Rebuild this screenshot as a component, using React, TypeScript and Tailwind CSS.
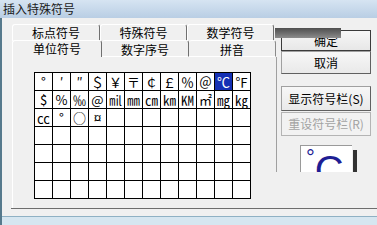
import React from "react";

const rows: string[][] = [
  ["°", "′", "″", "＄", "￥", "〒", "￠", "￡", "％", "＠", "℃", "℉"],
  ["$", "%", "‰", "@", "㏕", "㎜", "㎝", "㎞", "㏎", "㎡", "㎎", "㎏"],
  ["㏄", "°", "○", "¤", "", "", "", "", "", "", "", ""],
  ["", "", "", "", "", "", "", "", "", "", "", ""],
  ["", "", "", "", "", "", "", "", "", "", "", ""],
  ["", "", "", "", "", "", "", "", "", "", "", ""],
  ["", "", "", "", "", "", "", "", "", "", "", ""],
];

const backTabs = [
  { label: "标点符号", w: "w-[88px]" },
  { label: "特殊符号", w: "w-[87px]" },
  { label: "数学符号", w: "w-[87px]" },
];

const SymbolGrid = () => (
  <div className="grid grid-cols-[repeat(12,17px)] grid-rows-[repeat(7,17px)] gap-px bg-black p-px w-max">
    {rows.flat().map((s, i) => (
      <div
        key={i}
        className={
          i === 10
            ? "bg-[#1430b4] text-white text-[13px] leading-[17px] text-center"
            : "bg-white text-black text-[13px] leading-[17px] text-center"
        }
      >
        {s}
      </div>
    ))}
  </div>
);

const App = () => {
  return (
    <div className="w-[377px] h-[225px] bg-[#f0f0f0] flex flex-col overflow-hidden font-['Noto_Sans_CJK_SC',sans-serif] text-black">
      {/* title bar */}
      <div className="h-[18px] shrink-0 bg-gradient-to-b from-[#d6e4f2] to-[#b9cee4] pl-[3px] text-[12px] leading-[18px] text-[#1b1b1b]">
        插入特殊符号
      </div>

      <div className="flex-1 flex flex-col border-l-2 border-l-[#56798c]">
        <div className="h-[190px] flex">
          {/* tabs + panel */}
          <div className="w-[275px] pl-[10px] flex flex-col">
            <div className="flex mt-[6px] h-[17px]">
              {backTabs.map((t) => (
                <div
                  key={t.label}
                  className={`${t.w} h-[17px] border-t border-l border-r border-t-white border-l-white border-r-[#707070] rounded-t-[3px] text-center text-[12px] leading-[16px]`}
                >
                  {t.label}
                </div>
              ))}
            </div>
            <div className="flex -mt-px h-[17px]">
              <div className="w-[90px] h-[17px] bg-[#f0f0f0] border-t border-l border-r border-t-white border-l-white border-r-[#707070] rounded-t-[3px] text-center text-[12px] leading-[14px] pt-px">
                单位符号
              </div>
              <div className="w-[87px] h-[17px] border-t border-r border-b border-t-white border-r-[#707070] border-b-white rounded-t-[3px] text-center text-[12px] leading-[14px] pt-[2px]">
                数字序号
              </div>
              <div className="w-[87px] h-[17px] border-t border-r border-b border-t-white border-r-[#8a8a8a] border-b-white rounded-t-[3px] text-center text-[12px] leading-[14px] pt-[2px]">
                拼音
              </div>
            </div>
            <div className="flex-1 flex border-l border-l-white">
              <div className="flex-1 pl-[21px] pt-[15px]">
                <SymbolGrid />
              </div>
              <div className="w-px h-[115px] bg-[#a0a0a0]" />
            </div>
          </div>

          {/* buttons */}
          <div className="relative flex flex-col pl-[4px] pt-[12px]">
            <div className="w-[90px] h-[21px] border border-[#3a3a3a] bg-gradient-to-b from-[#f7f7f7] to-[#e7e7e7] flex items-center justify-center text-[12px]">
              确定
            </div>
            <div className="w-[90px] h-[23px] border border-[#a0a0a0] border-r-[#606060] border-b-[#606060] bg-gradient-to-b from-[#f7f7f7] to-[#e9e9e9] flex items-center justify-center text-[12px]">
              取消
            </div>
            <div className="mt-[12px] w-[90px] h-[25px] border border-[#a0a0a0] border-r-[#606060] border-b-[#606060] bg-gradient-to-b from-[#f7f7f7] to-[#e9e9e9] flex items-center justify-center text-[12px]">
              显示符号栏(S)
            </div>
            <div className="mt-px w-[90px] h-[24px] border border-[#b4b4b4] bg-[#f2f2f2] flex items-center justify-center text-[12px] text-[#a3a3a3]">
              重设符号栏(R)
            </div>
            <div className="mt-[9px] ml-[19px] flex items-start">
              <div className="w-[52px] h-[27px] bg-white border-t border-l border-[#9a9a9a] overflow-hidden flex items-start font-['Liberation_Sans',sans-serif] text-[#1e1e94]">
                <span className="ml-[5px] mt-[1px] text-[22px] leading-none">°</span>
                <span className="mt-[4px] text-[40px] leading-none">C</span>
              </div>
              <div className="ml-px mt-[5px] w-[4px] h-[22px] bg-[#333333]" />
            </div>

            {/* grey bar lying over the default button */}
            <div className="absolute left-[-2px] top-[10px] w-[66px] h-[10px] bg-gradient-to-b from-[#4f4f4f] via-[#6c6c6c] to-[#8c8c8c]" />
          </div>
        </div>

        <div className="ml-[9px] h-px bg-[#6e6e6e]" />
        <div className="flex-1" />
        <div className="h-[9px] border-t border-t-[#8fb1c4] bg-[#d6e6f0]" />
      </div>
    </div>
  );
};

export default App;
